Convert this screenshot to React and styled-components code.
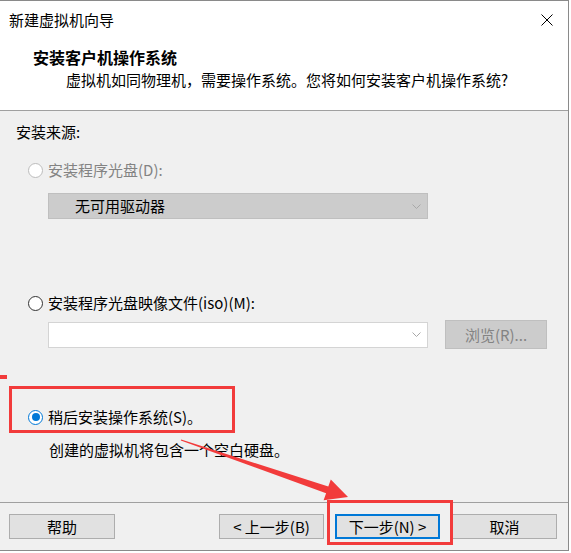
import React from 'react';
import styled, { createGlobalStyle } from 'styled-components';

const Global = createGlobalStyle`
  html, body { margin: 0; padding: 0; background: #fff; }
  body {
    font-family: "Noto Sans CJK SC", "Noto Sans", sans-serif;
    font-size: 15px;
    color: #000;
  }
`;

const Window = styled.div`
  position: relative;
  box-sizing: border-box;
  width: 569px;
  height: 551px;
  border-top: 1px solid #8a8a8a;
  border-right: 1px solid #8a8a8a;
  border-bottom: 1px solid #8a8a8a;
  background: #f0f0f0;
  display: flex;
  flex-direction: column;
`;

const TitleBar = styled.div`
  flex: none;
  height: 38px;
  box-sizing: border-box;
  background: #fff;
  display: flex;
  align-items: center;
  justify-content: space-between;
  padding: 0 15px 0 9px;
`;

const Title = styled.span`
  font-size: 15px;
  line-height: 22px;
`;

const Header = styled.div`
  flex: none;
  height: 72px;
  box-sizing: border-box;
  background: #fff;
  border-bottom: 1px solid #a0a0a0;
  padding: 7px 0 0 33px;
`;

const HeaderTitle = styled.div`
  font-weight: 700;
  font-size: 16px;
  line-height: 22px;
`;

const HeaderDesc = styled.div`
  font-size: 15px;
  line-height: 22px;
  margin: 1px 0 0 33px;
`;

const Main = styled.div`
  flex: 1;
  padding: 10px 0 0 16px;
  display: flex;
  flex-direction: column;
  align-items: flex-start;
`;

const SectionLabel = styled.div`
  line-height: 22px;
`;

const OptionRow = styled.div`
  display: flex;
  align-items: center;
  gap: 5px;
  height: 22px;
  margin: ${(p) => p.$mt}px 0 0 12px;
  color: ${(p) => (p.$disabled ? '#838383' : '#000')};
  line-height: 22px;
`;

const Radio = styled.span`
  position: relative;
  width: 15px;
  height: 15px;
  box-sizing: border-box;
  border-radius: 50%;
  background: #fff;
  border: ${(p) => (p.$checked ? '1.5px' : '1px')} solid
    ${(p) => (p.$checked ? '#0078d7' : p.$disabled ? '#bcbcbc' : '#333')};
  display: flex;
  align-items: center;
  justify-content: center;
  &::after {
    content: '';
    display: ${(p) => (p.$checked ? 'block' : 'none')};
    width: 8px;
    height: 8px;
    border-radius: 50%;
    background: #0078d7;
  }
`;

const Select = styled.div`
  box-sizing: border-box;
  width: 380px;
  height: 26px;
  margin: ${(p) => p.$mt || 0}px 0 0 ${(p) => p.$ml || 0}px;
  background: ${(p) => (p.$disabled ? '#cccccc' : '#ffffff')};
  border: 1px solid ${(p) => (p.$disabled ? '#bfbfbf' : '#d4d4d4')};
  display: flex;
  align-items: center;
  padding: 0 6px 0 26px;
  line-height: 22px;
`;

const SelectText = styled.span`
  flex: 1;
`;

const Chevron = () => (
  <svg width="9" height="5" viewBox="0 0 9 5">
    <polyline points="0.5,0.5 4.5,4.5 8.5,0.5" fill="none" stroke="#a8a8a8" strokeWidth="1" />
  </svg>
);

const ComboRow = styled.div`
  display: flex;
  align-items: center;
  gap: 17px;
  height: 29px;
  margin: 6px 0 0 32px;
`;

const BrowseButton = styled.button`
  box-sizing: border-box;
  width: 102px;
  height: 29px;
  padding: 0;
  background: #cccccc;
  border: 1px solid #bfbfbf;
  color: #838383;
  font-family: inherit;
  font-size: 15px;
  line-height: 22px;
`;

const Note = styled.div`
  margin: 11px 0 0 33px;
  line-height: 22px;
`;

const Footer = styled.div`
  flex: none;
  height: 48px;
  box-sizing: border-box;
  border-top: 1px solid #a0a0a0;
  padding: 11px 11px 0 9px;
  display: flex;
  align-items: flex-start;
`;

const Button = styled.button`
  box-sizing: border-box;
  width: ${(p) => p.$w || 105}px;
  height: 25px;
  padding: 0;
  margin-left: ${(p) => p.$ml || 0}px;
  background: #e1e1e1;
  border: ${(p) => (p.$primary ? '2px solid #0078d7' : '1px solid #adadad')};
  font-family: inherit;
  font-size: 15px;
  line-height: 22px;
  color: #000;
  display: flex;
  align-items: center;
  justify-content: center;
`;

const Spacer = styled.div`
  flex: 1;
`;

const Mark = styled.div`
  position: absolute;
  left: ${(p) => p.$x}px;
  top: ${(p) => p.$y}px;
  width: ${(p) => p.$w}px;
  height: ${(p) => p.$h}px;
  box-sizing: border-box;
  border: ${(p) => (p.$fill ? 'none' : '3px solid #f23b3b')};
  background: ${(p) => (p.$fill ? '#f23b3b' : 'transparent')};
  pointer-events: none;
`;

const ArrowLayer = styled.svg`
  position: absolute;
  left: 0;
  top: 0;
  pointer-events: none;
`;

export default function App() {
  return (
    <>
      <Global />
      <Window>
        <TitleBar>
          <Title>新建虚拟机向导</Title>
          <svg width="12" height="12" viewBox="0 0 12 12">
            <path d="M0.5 0.5 L11.5 11.5 M11.5 0.5 L0.5 11.5" stroke="#000" strokeWidth="1" />
          </svg>
        </TitleBar>
        <Header>
          <HeaderTitle>安装客户机操作系统</HeaderTitle>
          <HeaderDesc>虚拟机如同物理机，需要操作系统。您将如何安装客户机操作系统?</HeaderDesc>
        </Header>
        <Main>
          <SectionLabel>安装来源:</SectionLabel>
          <OptionRow $mt={16} $disabled>
            <Radio $disabled />
            <span>安装程序光盘(D):</span>
          </OptionRow>
          <Select $disabled $mt={12} $ml={32}>
            <SelectText>无可用驱动器</SelectText>
            <Chevron />
          </Select>
          <OptionRow $mt={73}>
            <Radio />
            <span>安装程序光盘映像文件(iso)(M):</span>
          </OptionRow>
          <ComboRow>
            <Select>
              <SelectText />
              <Chevron />
            </Select>
            <BrowseButton>浏览(R)...</BrowseButton>
          </ComboRow>
          <OptionRow $mt={57}>
            <Radio $checked />
            <span>稍后安装操作系统(S)。</span>
          </OptionRow>
          <Note>创建的虚拟机将包含一个空白硬盘。</Note>
        </Main>
        <Footer>
          <Button $w={106}>帮助</Button>
          <Spacer />
          <Button>&lt; 上一步(B)</Button>
          <Button $primary $ml={11}>下一步(N) &gt;</Button>
          <Button $ml={12}>取消</Button>
        </Footer>

        <Mark $fill $x={0} $y={374} $w={7} $h={4} />
        <Mark $x={9} $y={385} $w={226} $h={47} />
        <Mark $x={327} $y={499} $w={126} $h={45} />
        <ArrowLayer width="569" height="551" viewBox="0 0 569 551">
          <polygon
            points="181.2,438.4 328.3,485.6 330.8,478.5 348,496 323.6,499.3 326.1,492.2 180.8,439.6"
            fill="#f23b3b"
          />
        </ArrowLayer>
      </Window>
    </>
  );
}
